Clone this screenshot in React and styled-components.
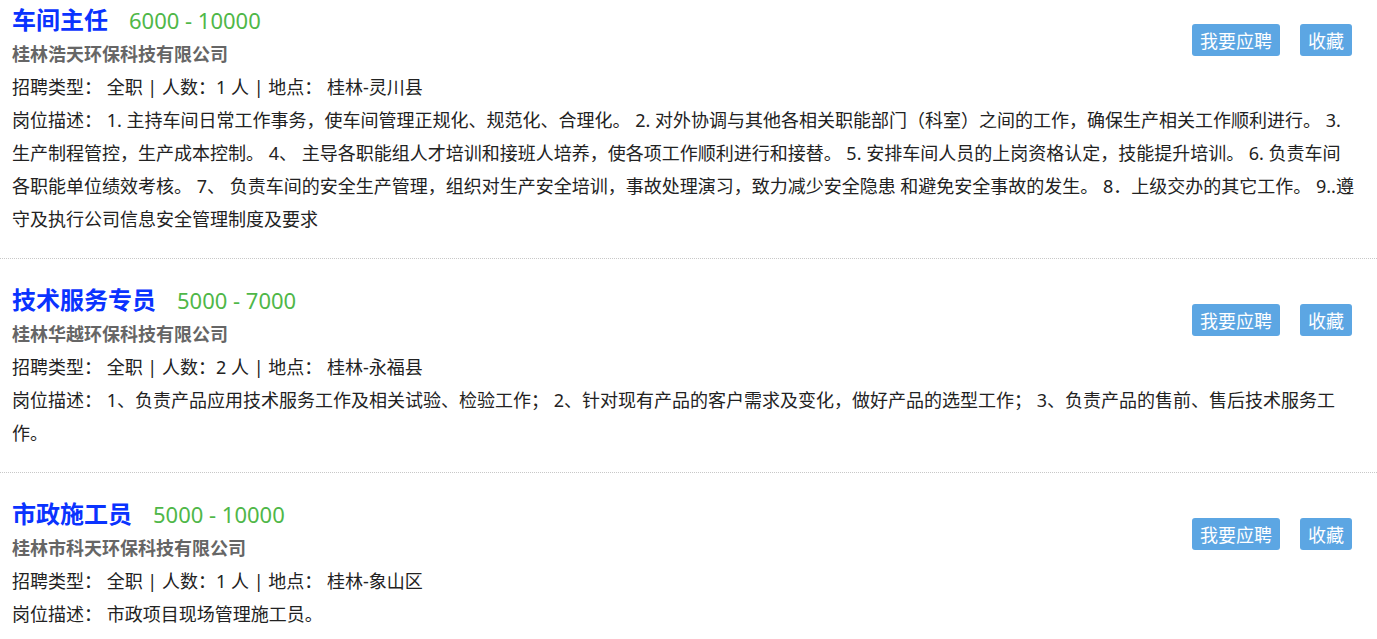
import styled, { createGlobalStyle } from 'styled-components';

const GlobalStyle = createGlobalStyle`
  html, body {
    margin: 0;
    padding: 0;
    background: #fff;
    overflow: hidden;
  }
  body {
    font-family: "Noto Sans", "Noto Sans CJK SC", sans-serif;
    color: #222;
  }
`;

const jobs = [
  {
    id: 1,
    title: '车间主任',
    salary: '6000 - 10000',
    company: '桂林浩天环保科技有限公司',
    count: 1,
    place: '桂林-灵川县',
    desc:
      '1. 主持车间日常工作事务，使车间管理正规化、规范化、合理化。 2. 对外协调与其他各相关职能部门（科室）之间的工作，确保生产相关工作顺利进行。 3. 生产制程管控，生产成本控制。 4、 主导各职能组人才培训和接班人培养，使各项工作顺利进行和接替。 5. 安排车间人员的上岗资格认定，技能提升培训。 6. 负责车间各职能单位绩效考核。 7、 负责车间的安全生产管理，组织对生产安全培训，事故处理演习，致力减少安全隐患 和避免安全事故的发生。 8．上级交办的其它工作。 9..遵守及执行公司信息安全管理制度及要求',
  },
  {
    id: 2,
    title: '技术服务专员',
    salary: '5000 - 7000',
    company: '桂林华越环保科技有限公司',
    count: 2,
    place: '桂林-永福县',
    desc:
      '1、负责产品应用技术服务工作及相关试验、检验工作； 2、针对现有产品的客户需求及变化，做好产品的选型工作； 3、负责产品的售前、售后技术服务工作。',
  },
  {
    id: 3,
    title: '市政施工员',
    salary: '5000 - 10000',
    company: '桂林市科天环保科技有限公司',
    count: 1,
    place: '桂林-象山区',
    desc: '市政项目现场管理施工员。',
  },
];

const List = styled.div`
  margin-top: -21px;
`;

const Item = styled.div`
  padding: 24px 23px 22px 12px;
  border-bottom: 1px dotted #c8c8c8;
`;

const Header = styled.div`
  display: flex;
  justify-content: space-between;
  align-items: flex-start;
  padding-right: 2px;
`;

const TitleRow = styled.div`
  display: flex;
  align-items: baseline;
  gap: 21px;
  height: 34px;
  line-height: 34px;
`;

const Title = styled.span`
  font-size: 24px;
  font-weight: 700;
  color: #0a33ff;
`;

const Salary = styled.span`
  font-size: 22px;
  color: #4fb748;
`;

const Company = styled.div`
  font-size: 18px;
  font-weight: 700;
  color: #666;
  line-height: 34px;
`;

const Line = styled.div`
  font-size: 18px;
  line-height: 33px;
  color: #222;
`;

const Actions = styled.div`
  display: flex;
  gap: 20px;
  margin-top: 21px;
  flex-shrink: 0;
`;

const Button = styled.button`
  height: 32px;
  padding: 0 8px;
  border: none;
  border-radius: 3px;
  background: #5ca6e3;
  color: #fff;
  font-family: "Noto Sans CJK SC", sans-serif;
  font-size: 18px;
  line-height: 32px;
  cursor: pointer;
`;

const App = () => (
  <>
    <GlobalStyle />
    <List>
      {jobs.map((job) => (
        <Item key={job.id}>
          <Header>
            <div>
              <TitleRow>
                <Title>{job.title}</Title>
                <Salary>{job.salary}</Salary>
              </TitleRow>
              <Company>{job.company}</Company>
            </div>
            <Actions>
              <Button>我要应聘</Button>
              <Button>收藏</Button>
            </Actions>
          </Header>
          <Line>
            招聘类型： 全职 | 人数：{job.count} 人 | 地点： {job.place}
          </Line>
          <Line>岗位描述： {job.desc}</Line>
        </Item>
      ))}
    </List>
  </>
);

export default App;
